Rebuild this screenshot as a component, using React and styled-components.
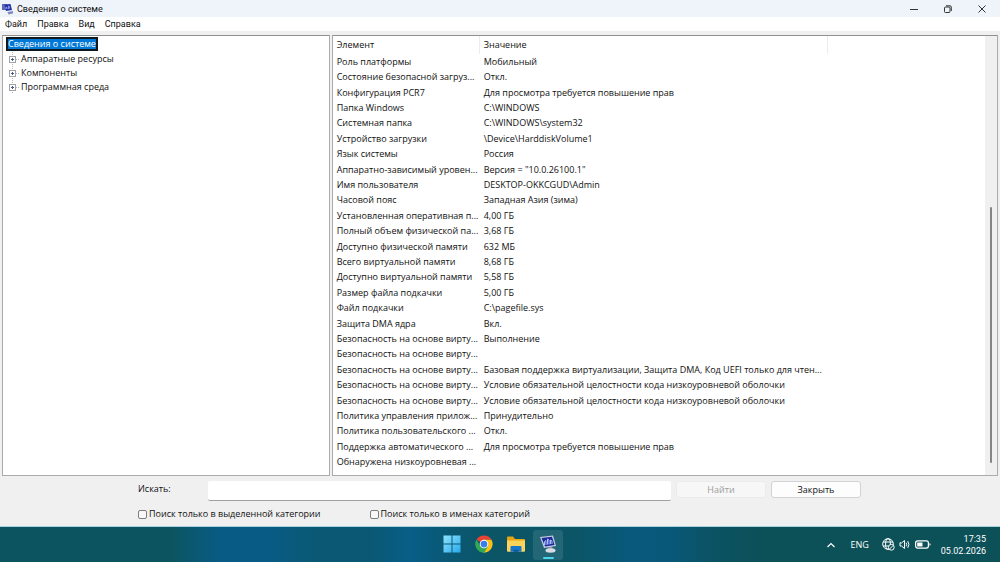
import React, { useState } from 'react';
import styled, { createGlobalStyle } from 'styled-components';

const GlobalStyle = createGlobalStyle`
  * { box-sizing: border-box; }
  body {
    margin: 0;
    background: #f0f0f0;
    color: #111;
    font-family: "Open Sans", "Noto Sans", sans-serif;
    font-size: 9px;
    line-height: 14px;
  }
  button, input { font: inherit; color: inherit; }
`;

const Desktop = styled.div`
  display: flex;
  flex-direction: column;
  min-height: 100vh;
`;

const Window = styled.div`
  flex: 1;
  display: flex;
  flex-direction: column;
`;

const TitleBar = styled.header`
  display: flex;
  align-items: center;
  height: 17px;
  padding-left: 2px;
  background: #eff3fa;
`;

const Title = styled.h1`
  flex: 1;
  margin: 0 0 0 4px;
  font-family: Roboto, sans-serif;
  font-size: 9px;
  font-weight: 400;
`;

const CaptionButton = styled.button`
  display: flex;
  align-items: center;
  justify-content: center;
  width: 34px;
  height: 17px;
  padding: 0 2px 0 0;
  border: none;
  background: none;
  &:hover { background: #dde2ea; }
`;

const MenuBar = styled.nav`
  display: flex;
  gap: 10px;
  height: 14px;
  padding-left: 5px;
  background: #fff;
`;

const MenuItem = styled.button`
  padding: 0;
  border: none;
  background: none;
  font-family: Roboto, sans-serif;
  line-height: 14px;
`;

const Panels = styled.main`
  flex: 1;
  display: flex;
  gap: 2px;
  padding: 4px 2px 0;
`;

const Panel = styled.section`
  display: flex;
  flex: ${({ $grow }) => $grow};
  min-width: 0;
  border: 1px solid #a9abad;
  border-top-color: #8f9193;
  background: #fff;
`;

const Tree = styled.ul`
  margin: 0;
  padding: 1px 0 0 3px;
  list-style: none;
`;

const TreeRoot = styled.button`
  display: block;
  height: 14px;
  padding: 0;
  border: 2px solid #101820;
  background: #0078d7;
  color: #fff;
  line-height: 10px;
`;

const TreeChildren = styled.ul`
  margin: 0;
  padding: 1px 0 0 3px;
  list-style: none;
`;

const TreeItem = styled.li`
  display: flex;
  align-items: center;
  gap: 2px;
  height: 14px;
  white-space: nowrap;
`;

const Details = styled.div`
  flex: 1;
  display: flex;
  min-width: 0;
  padding-bottom: 5px;
`;

const InfoTable = styled.table`
  flex: 1;
  display: flex;
  flex-direction: column;
  thead { display: block; }
  tbody {
    flex: 1;
    display: grid;
    grid-auto-rows: 1fr;
  }
  tr {
    display: grid;
    grid-template-columns: 147px 348px 1fr;
    align-items: center;
  }
  th, td {
    padding: 0 0 0 4px;
    font-weight: 400;
    text-align: left;
    white-space: nowrap;
  }
  th {
    height: 18px;
    border-right: 1px solid #ececec;
    line-height: 18px;
  }
`;

const ScrollTrack = styled.div`
  display: flex;
  flex-direction: column;
  align-items: center;
  justify-content: flex-end;
  width: 12px;
  padding-bottom: 12px;
  background: #f0f0f0;
`;

const ScrollThumb = styled.div`
  width: 2px;
  height: 60%;
  border-radius: 1px;
  background: #858585;
`;

const SearchForm = styled.form`
  display: grid;
  grid-template-columns: 65px 1fr 90px 90px;
  column-gap: 5px;
  align-items: start;
  align-content: start;
  row-gap: 6px;
  height: 50px;
  padding: 5px 139px 0 138px;
`;

const SearchLabel = styled.label`
  line-height: 16px;
`;

const SearchInput = styled.input`
  width: 100%;
  height: 20px;
  padding: 0 4px;
  border: none;
  border-bottom: 1px solid #a0a0a0;
  border-radius: 2px;
  outline: none;
  background: #fff;
`;

const PushButton = styled.button`
  height: 17px;
  padding: 0;
  border: 1px solid #d2d2d2;
  border-radius: 3px;
  background: #fdfdfd;
  line-height: 15px;
  &:disabled {
    border-color: #ebebeb;
    background: #f7f7f7;
    color: #9c9c9c;
  }
`;

const Options = styled.div`
  grid-column: 1 / -1;
  display: flex;
  gap: 49px;
`;

const CheckLabel = styled.label`
  display: flex;
  align-items: center;
  gap: 2px;
`;

const CheckBox = styled.input`
  appearance: none;
  width: 9px;
  height: 9px;
  margin: 0;
  border: 1px solid #7d7d7d;
  border-radius: 2px;
  background: #f8f8f8;
  &:checked { background: #0067c0; }
`;

const Taskbar = styled.footer`
  display: grid;
  grid-template-columns: 1fr auto 1fr;
  align-items: center;
  height: 36px;
  border-top: 1px solid #a9d3dc;
  background: linear-gradient(90deg, #0c5560 0%, #0c5560 17%, #085b84 22%, #085b84 27%, #0a5873 32%, #0a5873 37%, #075e88 41%, #0a5873 45%, #0b5567 49%, #0b5567 58%, #08597c 63%, #08587a 67%, #0b5364 71%, #0c5058 76%, #0c5058 100%);
  color: #fff;
`;

const Apps = styled.div`
  grid-column: 2;
  display: flex;
  gap: 2px;
`;

const AppButton = styled.button`
  display: flex;
  flex-direction: column;
  align-items: center;
  width: 30px;
  height: 30px;
  padding: 5px 0 0;
  border: none;
  border-radius: 3px;
  background: ${({ $active }) => ($active ? 'rgba(255, 255, 255, 0.1)' : 'none')};
`;

const ActiveMark = styled.span`
  width: 11px;
  height: 2px;
  margin-top: 4px;
  border-radius: 1px;
  background: #4cd5ee;
`;

const Tray = styled.div`
  display: flex;
  align-items: center;
  justify-content: flex-end;
  padding-right: 14px;
`;

const TrayButton = styled.button`
  display: flex;
  align-items: center;
  gap: 4px;
  margin-right: ${({ $gap }) => $gap};
  padding: 0;
  border: none;
  background: none;
`;

const Clock = styled.time`
  font-family: Roboto, sans-serif;
  line-height: 12px;
  text-align: right;
`;

const tree = ['Аппаратные ресурсы', 'Компоненты', 'Программная среда'];

const rows = [
  ['Роль платформы', 'Мобильный'],
  ['Состояние безопасной загруз...', 'Откл.'],
  ['Конфигурация PCR7', 'Для просмотра требуется повышение прав'],
  ['Папка Windows', 'C:\\WINDOWS'],
  ['Системная папка', 'C:\\WINDOWS\\system32'],
  ['Устройство загрузки', '\\Device\\HarddiskVolume1'],
  ['Язык системы', 'Россия'],
  ['Аппаратно-зависимый уровен...', 'Версия = "10.0.26100.1"'],
  ['Имя пользователя', 'DESKTOP-OKKCGUD\\Admin'],
  ['Часовой пояс', 'Западная Азия (зима)'],
  ['Установленная оперативная п...', '4,00 ГБ'],
  ['Полный объем физической па...', '3,68 ГБ'],
  ['Доступно физической памяти', '632 МБ'],
  ['Всего виртуальной памяти', '8,68 ГБ'],
  ['Доступно виртуальной памяти', '5,58 ГБ'],
  ['Размер файла подкачки', '5,00 ГБ'],
  ['Файл подкачки', 'C:\\pagefile.sys'],
  ['Защита DMA ядра', 'Вкл.'],
  ['Безопасность на основе вирту...', 'Выполнение'],
  ['Безопасность на основе вирту...', ''],
  ['Безопасность на основе вирту...', 'Базовая поддержка виртуализации, Защита DMA, Код UEFI только для чтен...'],
  ['Безопасность на основе вирту...', 'Условие обязательной целостности кода низкоуровневой оболочки'],
  ['Безопасность на основе вирту...', 'Условие обязательной целостности кода низкоуровневой оболочки'],
  ['Политика управления прилож...', 'Принудительно'],
  ['Политика пользовательского ...', 'Откл.'],
  ['Поддержка автоматического ...', 'Для просмотра требуется повышение прав'],
  ['Обнаружена низкоуровневая ...', ''],
];

// monitor with a small chart, standing in front of a disk base
const SystemIcon = ({ size }) => (
  <svg width={size} height={size} viewBox="0 0 18 18">
    <path d="M1 2 14 .5l3 10.500L5 13z" fill="#c9cede" />
    <path d="M2.500 3 13 1.800l2.600 8.200-9.600 1.600z" fill="#1c2a9c" />
    <path d="M5.500 10V6.500L7 5.500V10M8.500 9.500V4l1.500 1v4.500M11.500 9V5l1.500 1v3" stroke="#a9bcff" fill="none" />
    <path d="m9 12.400 4-.6 1 2.600-5 1z" fill="#8d93a8" />
    <ellipse cx="11.500" cy="15.500" rx="5" ry="2.200" fill="#d9dce6" />
  </svg>
);

const TitleIcon = () => (
  <svg width="11" height="12" viewBox="0 0 11 12">
    <path d="M0 1h5v6H0z" fill="#5a6bb8" />
    <path d="M2.500 1.500 8.500 1l1.500 6-6 1z" fill="#2433a4" />
    <path d="M4 6V4l1 .5V6M6.500 6V3l1 .5v2" stroke="#a9bcff" strokeWidth=".7" fill="none" />
    <path d="M5.500 9 11 8v2.500l-4.500 1z" fill="#7f8bc2" />
  </svg>
);

const Expander = () => (
  <svg width="10" height="14" viewBox="0 0 10 14" fill="none">
    <path d="M3.500 0v14M7 7.500h3" stroke="#b9b9b9" strokeDasharray="1 1" />
    <rect x=".5" y="4.500" width="6" height="6" fill="#fff" stroke="#a3a3a3" />
    <path d="M2 7.500h3M3.500 6v3" stroke="#4a5a94" />
  </svg>
);

const StartIcon = () => (
  <svg width="18" height="18" viewBox="0 0 18 18">
    <defs>
      <linearGradient id="start" x1="0" y1="0" x2="1" y2="1">
        <stop offset="0" stopColor="#8fe4fd" />
        <stop offset="1" stopColor="#28a9ec" />
      </linearGradient>
    </defs>
    <path d="M.5.5h8v8h-8zM9.500.5h8v8h-8zM.5 9.500h8v8h-8zM9.500 9.500h8v8h-8z" fill="url(#start)" />
  </svg>
);

const ChromeIcon = () => (
  <svg width="18" height="18" viewBox="0 0 48 48">
    <path d="M24 24 4.100 12.500A23 23 0 0 1 43.900 12.500H24z" fill="#e94235" />
    <path d="M24 24 43.900 12.500A23 23 0 0 1 24 47l10-17z" fill="#fbc116" />
    <path d="M24 24 24 47A23 23 0 0 1 4.100 12.500L14 30z" fill="#31a853" />
    <path d="M24 12.500h19.900L34 30zM34 30 24 47 14 30z" fill="#fbc116" />
    <path d="M4.100 12.500 14 30 24 35.500 34 30 24 47A23 23 0 0 1 4.100 12.500" fill="#31a853" />
    <circle cx="24" cy="24" r="11.500" fill="#fff" />
    <circle cx="24" cy="24" r="9" fill="#3b7de9" />
  </svg>
);

const FolderIcon = () => (
  <svg width="20" height="18" viewBox="0 0 20 18">
    <path d="M1 2.500Q1 1.500 2 1.500h5L9 4h9q1 0 1 1v11H1z" fill="#e8a511" />
    <path d="M1 5.500h18V16q0 .8-1 .8H2q-1 0-1-.8z" fill="#fdd459" />
    <path d="M4.500 16.800V12q0-1 1-1h9q1 0 1 1v4.800z" fill="#1976c9" />
    <path d="M7.500 16.800v-2h5v2z" fill="#0d569b" />
  </svg>
);

const GlobeIcon = () => (
  <svg width="13" height="13" viewBox="0 0 13 13" fill="none" stroke="#fff">
    <circle cx="6" cy="6" r="5.300" />
    <ellipse cx="6" cy="6" rx="2.400" ry="5.300" />
    <path d="M1 4h10M1 8h6" />
    <circle cx="9.300" cy="9.300" r="2.900" fill="#0c5058" />
    <path d="m7.400 11.200 3.800-3.800" />
  </svg>
);

const SpeakerIcon = () => (
  <svg width="12" height="11" viewBox="0 0 12 11" fill="none" stroke="#fff" strokeLinecap="round" strokeLinejoin="round">
    <path d="M1 4v3h1.500L5.500 9.500v-8L2.500 4z" />
    <path d="M7.300 4q1 1.500 0 3M9 2.500q2 3 0 6" />
  </svg>
);

const BatteryIcon = () => (
  <svg width="16" height="9" viewBox="0 0 16 9">
    <rect x=".6" y=".9" width="12.800" height="7.200" rx="2" fill="none" stroke="#fff" strokeWidth="1.200" />
    <path d="M2.200 2.500h5.300v4H2.200z" fill="#fff" />
    <path d="M14.500 3v3q1-.4 1-1.500t-1-1.500" fill="#fff" />
  </svg>
);

function SearchBar() {
  const [query, setQuery] = useState('');

  return (
    <SearchForm onSubmit={(e) => e.preventDefault()}>
      <SearchLabel htmlFor="query">Искать:</SearchLabel>
      <SearchInput id="query" value={query} onChange={(e) => setQuery(e.target.value)} />
      <PushButton type="submit" disabled={!query}>Найти</PushButton>
      <PushButton type="button">Закрыть</PushButton>
      <Options>
        <CheckLabel><CheckBox type="checkbox" />Поиск только в выделенной категории</CheckLabel>
        <CheckLabel><CheckBox type="checkbox" />Поиск только в именах категорий</CheckLabel>
      </Options>
    </SearchForm>
  );
}

function App() {
  return (
    <Desktop>
      <GlobalStyle />
      <Window>
        <TitleBar>
          <TitleIcon />
          <Title>Сведения о системе</Title>
          <CaptionButton aria-label="Свернуть">
            <svg width="8" height="8" viewBox="0 0 8 8"><path d="M0 4.500h8" stroke="#333" /></svg>
          </CaptionButton>
          <CaptionButton aria-label="Восстановить">
            <svg width="8" height="8" viewBox="0 0 8 8" fill="none" stroke="#333">
              <rect x=".5" y="2" width="5.500" height="5.500" rx="1" />
              <path d="M2 .8h4q1.300 0 1.300 1.300V6" />
            </svg>
          </CaptionButton>
          <CaptionButton aria-label="Закрыть окно">
            <svg width="8" height="8" viewBox="0 0 8 8"><path d="m.5.5 7 7m0-7-7 7" stroke="#333" /></svg>
          </CaptionButton>
        </TitleBar>
        <MenuBar>
          {['Файл', 'Правка', 'Вид', 'Справка'].map((item) => <MenuItem key={item}>{item}</MenuItem>)}
        </MenuBar>
        <Panels>
          <Panel $grow="327 1 0">
            <Tree>
              <li>
                <TreeRoot>Сведения о системе</TreeRoot>
                <TreeChildren>
                  {tree.map((item) => <TreeItem key={item}><Expander />{item}</TreeItem>)}
                </TreeChildren>
              </li>
            </Tree>
          </Panel>
          <Panel $grow="667 1 0">
            <Details>
              <InfoTable>
                <thead>
                  <tr><th>Элемент</th><th>Значение</th></tr>
                </thead>
                <tbody>
                  {rows.map(([name, value], i) => (
                    <tr key={i}><td>{name}</td><td>{value}</td></tr>
                  ))}
                </tbody>
              </InfoTable>
            </Details>
            <ScrollTrack><ScrollThumb /></ScrollTrack>
          </Panel>
        </Panels>
        <SearchBar />
      </Window>
      <Taskbar>
        <Apps>
          <AppButton aria-label="Пуск"><StartIcon /></AppButton>
          <AppButton aria-label="Chrome"><ChromeIcon /></AppButton>
          <AppButton aria-label="Проводник"><FolderIcon /></AppButton>
          <AppButton aria-label="Сведения о системе" $active><SystemIcon size={18} /><ActiveMark /></AppButton>
        </Apps>
        <Tray>
          <TrayButton $gap="15px" aria-label="Скрытые значки">
            <svg width="8" height="6" viewBox="0 0 8 6" fill="none"><path d="m.5 5 3.500-3.500L7.500 5" stroke="#fff" strokeWidth="1.200" /></svg>
          </TrayButton>
          <TrayButton $gap="13px">ENG</TrayButton>
          <TrayButton $gap="10px" aria-label="Сеть, звук, батарея">
            <GlobeIcon />
            <SpeakerIcon />
            <BatteryIcon />
          </TrayButton>
          <Clock>17:35<br />05.02.2026</Clock>
        </Tray>
      </Taskbar>
    </Desktop>
  );
}

export default App;
